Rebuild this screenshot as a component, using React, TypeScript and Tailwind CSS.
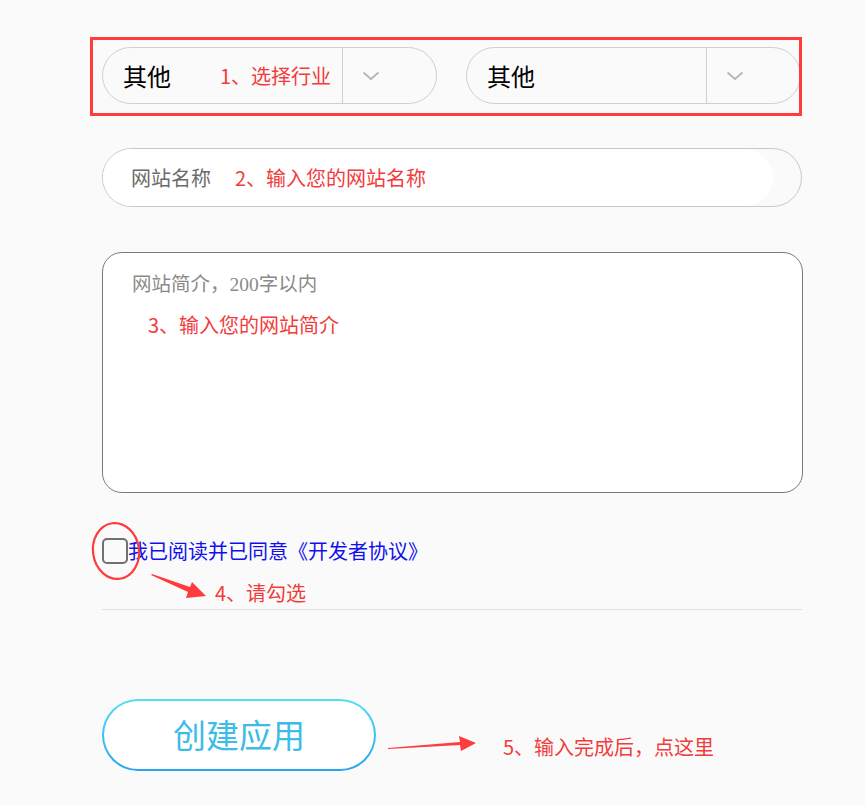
const red = 'text-[#f23c3c]';

const Chevron = () => (
  <svg width="18" height="10" viewBox="0 0 18 10" fill="none">
    <path d="M1.5 1.5 L9 8 L16.5 1.5" stroke="#b5b5b5" strokeWidth="1.8" />
  </svg>
);

const Select = ({ value, hint }: { value: string; hint?: string }) => (
  <div className="flex h-[57px] w-[335px] shrink-0 items-stretch rounded-full border border-[#cfcfcf] bg-[#fafafa]">
    <div className="flex w-[239px] items-center pl-[20px]">
      <span className="text-[24px] text-black">{value}</span>
      {hint && <span className={`ml-[49px] text-[20px] ${red}`}>{hint}</span>}
    </div>
    <div className="flex flex-1 items-center border-l border-[#cfcfcf] pl-[19px]">
      <Chevron />
    </div>
  </div>
);

export default function App() {
  return (
    <div
      className="relative min-h-[805px] w-full bg-[#fafafa] pt-[37px] pl-[90px]"
      style={{ fontFamily: '"Microsoft YaHei", "Noto Sans CJK SC", "Noto Sans", sans-serif' }}
    >
      {/* step 1 */}
      <div className="flex h-[79px] w-[712px] gap-[29px] overflow-hidden border-[3px] border-[#ff3b3b] pt-[7px] pl-[9px]">
        <Select value="其他" hint="1、选择行业" />
        <Select value="其他" />
      </div>

      {/* step 2 */}
      <div className="mt-[32px] ml-[12px] flex h-[59px] w-[700px] rounded-full border border-[#c8c8c8] bg-[#fafafa]">
        <div className="mr-[28px] flex flex-1 items-center rounded-full bg-white pl-[28px]">
          <span className="text-[20px] text-[#6b6b6b]">网站名称</span>
          <span className={`ml-[24px] text-[20px] ${red}`}>2、输入您的网站名称</span>
        </div>
      </div>

      {/* step 3 */}
      <div className="mt-[45px] ml-[12px] h-[241px] w-[701px] rounded-[20px] border border-[#7a7a7a] bg-white pt-[18px] pl-[29px]">
        <p
          className="text-[19.5px] leading-[28px] text-[#8a8a8a]"
          style={{ fontFamily: '"SimSun", "Liberation Serif", "Noto Sans CJK SC", serif' }}
        >
          网站简介，200字以内
        </p>
        <p className={`mt-[12px] ml-[16px] text-[20px] leading-[28px] ${red}`}>3、输入您的网站简介</p>
      </div>

      {/* step 4 */}
      <div className="mt-[45px] ml-[12px] flex items-center">
        <div className="h-[26px] w-[26px] rounded-[5px] border-2 border-[#707070] bg-[#fafafa]" />
        <span className="text-[20px] leading-[26px] text-[#1010ee]">我已阅读并已同意《开发者协议》</span>
      </div>
      <p className={`mt-[17px] ml-[125px] text-[20px] leading-[24px] ${red}`}>4、请勾选</p>
      <div className="mt-[4px] ml-[12px] h-px w-[700px] bg-[#e0e0e0]" />

      {/* step 5 */}
      <div className="mt-[89px] ml-[12px] flex items-center">
        <div className="h-[72px] w-[274px] rounded-full bg-gradient-to-b from-[#52e0f0] to-[#26a4f2] p-[2px]">
          <button className="flex h-full w-full items-center justify-center rounded-full bg-white text-[33px] text-[#3bbde8]">
            创建应用
          </button>
        </div>
        <span className={`mt-[24px] ml-[127px] text-[20px] ${red}`}>5、输入完成后，点这里</span>
      </div>

      {/* annotation marks */}
      <svg className="pointer-events-none absolute left-[90px] top-[520px]" width="60" height="64" viewBox="0 0 60 64">
        <ellipse cx="26" cy="31" rx="23" ry="28" fill="none" stroke="#ff3b3b" strokeWidth="2.2" transform="rotate(-8 26 31)" />
      </svg>
      <svg className="pointer-events-none absolute left-[148px] top-[568px]" width="64" height="36" viewBox="0 0 64 36">
        <polygon points="4,6 42,19 44,14 58,28 38,30 40,24 3,7" fill="#ff3b3b" />
      </svg>
      <svg className="pointer-events-none absolute left-[384px] top-[731px]" width="96" height="26" viewBox="0 0 96 26">
        <polygon points="4,17 76,11 75,5 92,12 77,20 76,14 4,18" fill="#ff3b3b" />
      </svg>
    </div>
  );
}
